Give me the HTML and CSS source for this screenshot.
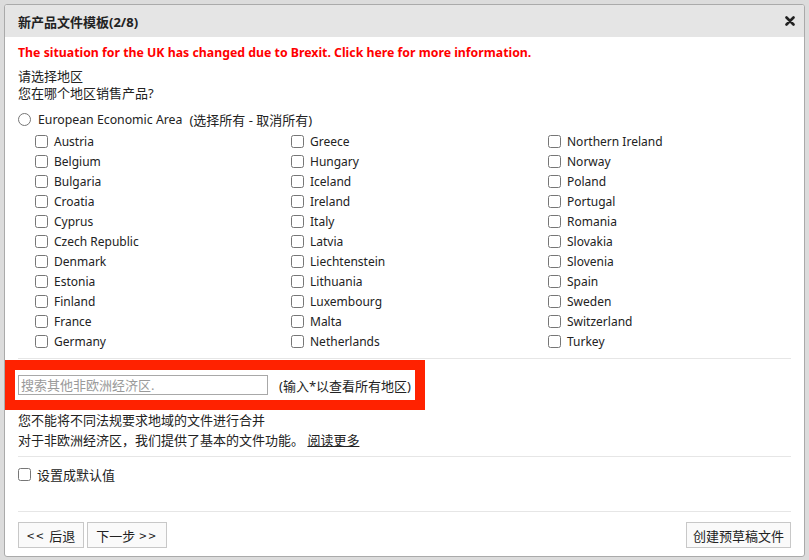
FILE: index.html
```html
<!DOCTYPE html>
<html lang="zh">
<head>
    <meta charset="UTF-8">
    <meta name="viewport" content="width=device-width, initial-scale=1.0">
    <title>新产品文件模板</title>
    <link rel="stylesheet" href="styles.css">
</head>
<body>
    <div class="dialog">
        <div class="dialog-head">
            <span class="title">新产品文件模板(2/8)</span>
            <span class="close">
                <svg width="10" height="10" viewBox="0 0 10 10"><path d="M1.5 1.5 L8.5 8.5 M8.5 1.5 L1.5 8.5" stroke="#222" stroke-width="2.6" stroke-linecap="round"/></svg>
            </span>
        </div>

        <div class="dialog-body">
            <p class="brexit">The situation for the UK has changed due to Brexit. Click here for more information.</p>
            <p class="question">请选择地区<br>您在哪个地区销售产品?</p>

            <label class="eea"><input type="radio" name="area"><span>European Economic Area</span><span class="toggle-all">(选择所有 - 取消所有)</span></label>

            <div class="countries">
                <label><input type="checkbox"> Austria</label>
                <label><input type="checkbox"> Belgium</label>
                <label><input type="checkbox"> Bulgaria</label>
                <label><input type="checkbox"> Croatia</label>
                <label><input type="checkbox"> Cyprus</label>
                <label><input type="checkbox"> Czech Republic</label>
                <label><input type="checkbox"> Denmark</label>
                <label><input type="checkbox"> Estonia</label>
                <label><input type="checkbox"> Finland</label>
                <label><input type="checkbox"> France</label>
                <label><input type="checkbox"> Germany</label>
                <label><input type="checkbox"> Greece</label>
                <label><input type="checkbox"> Hungary</label>
                <label><input type="checkbox"> Iceland</label>
                <label><input type="checkbox"> Ireland</label>
                <label><input type="checkbox"> Italy</label>
                <label><input type="checkbox"> Latvia</label>
                <label><input type="checkbox"> Liechtenstein</label>
                <label><input type="checkbox"> Lithuania</label>
                <label><input type="checkbox"> Luxembourg</label>
                <label><input type="checkbox"> Malta</label>
                <label><input type="checkbox"> Netherlands</label>
                <label><input type="checkbox"> Northern Ireland</label>
                <label><input type="checkbox"> Norway</label>
                <label><input type="checkbox"> Poland</label>
                <label><input type="checkbox"> Portugal</label>
                <label><input type="checkbox"> Romania</label>
                <label><input type="checkbox"> Slovakia</label>
                <label><input type="checkbox"> Slovenia</label>
                <label><input type="checkbox"> Spain</label>
                <label><input type="checkbox"> Sweden</label>
                <label><input type="checkbox"> Switzerland</label>
                <label><input type="checkbox"> Turkey</label>
            </div>

            <div class="line"></div>

            <div class="search-box">
                <input type="text" placeholder="搜索其他非欧洲经济区.">
                <span class="hint">(输入*以查看所有地区)</span>
            </div>

            <p class="note">您不能将不同法规要求地域的文件进行合并<br>对于非欧洲经济区，我们提供了基本的文件功能。 <a href="#">阅读更多</a></p>

            <div class="line"></div>

            <label class="default"><input type="checkbox"> 设置成默认值</label>
        </div>

        <div class="dialog-foot">
            <div class="nav-buttons">
                <button><span class="arrows">&lt;&lt;</span> 后退</button>
                <button>下一步 <span class="arrows">&gt;&gt;</span></button>
            </div>
            <button class="draft">创建预草稿文件</button>
        </div>
    </div>
</body>
</html>
```

FILE: styles.css
```css
body {
    margin: 0;
    padding: 4px 0 0 4px;
    background-color: #dcdcdc;
    font-family: "Noto Sans", "Noto Sans CJK SC", sans-serif;
    font-size: 13px;
    color: #222;
}
.dialog {
    width: 799px;
    height: 551px;
    background: #fff;
    border: 1px solid #aaa;
    border-radius: 3px;
    display: flex;
    flex-direction: column;
    overflow: hidden;
}
.dialog-head {
    height: 32px;
    background: #e5e5e5;
    display: flex;
    align-items: center;
    justify-content: space-between;
    padding: 0 9px 0 13px;
}
.title {
    font-weight: bold;
    font-size: 13px;
}
.close {
    display: flex;
}
.dialog-body {
    padding: 7px 13px 0 13px;
    flex: 1;
}
.dialog-body p {
    margin: 0;
}
.brexit {
    color: #f00;
    font-weight: bold;
    font-size: 12.3px;
    line-height: 18px;
}
.question {
    margin-top: 6px !important;
    line-height: 17px;
}
.eea {
    display: flex;
    align-items: center;
    height: 20px;
    margin-top: 7px;
    font-size: 12.3px;
}
.eea .toggle-all {
    font-size: 13px;
    margin-left: 7px;
}
.eea input {
    margin: 0 7px 0 0;
    width: 13px;
    height: 13px;
}
.countries {
    display: grid;
    grid-template-columns: 256px 257px 240px;
    grid-template-rows: repeat(11, 20px);
    grid-auto-flow: column;
    padding-left: 17px;
    margin-top: 2px;
    font-size: 12px;
}
.countries label,
.default {
    display: flex;
    align-items: center;
}
.countries input,
.default input {
    margin: 0 6px 0 0;
    width: 13px;
    height: 13px;
}
.line {
    height: 1px;
    background: #e6e6e6;
}
.countries + .line {
    margin-top: 7px;
}
.search-box {
    margin: 1px 0 0 -13px;
    width: 397px;
    border: 10px solid #ff2200;
    display: flex;
    align-items: center;
    padding: 5px 0 5px 3px;
    box-sizing: content-box;
    height: 20px;
}
.search-box input {
    width: 250px;
    height: 20px;
    box-sizing: border-box;
    border: 1px solid #a8a8a8;
    padding: 0 2px;
    font-family: "Noto Sans", "Noto Sans CJK SC", sans-serif;
    font-size: 13px;
    margin: 0;
    outline: none;
}
.search-box input::placeholder {
    color: #9a9a9a;
}
.hint {
    margin-left: 11px;
}
.note {
    line-height: 20px;
    margin-bottom: 6px !important;
}
.note a {
    color: #222;
    text-decoration: underline;
}
.default {
    height: 20px;
    margin-top: 7px;
}
.dialog-foot {
    margin: 0 13px;
    border-top: 1px solid #e6e6e6;
    padding: 10px 0 8px 0;
    display: flex;
    justify-content: space-between;
}
.nav-buttons {
    display: flex;
    gap: 3px;
}
button {
    height: 26px;
    background: #fafafa;
    border: 1px solid #c8c8c8;
    font-family: "Noto Sans CJK SC", sans-serif;
    font-size: 13px;
    color: #222;
    padding: 0 8px;
    word-spacing: 1px;
    margin: 0;
}
.draft {
    padding: 0 6px;
}
.arrows {
    letter-spacing: 2px;
}
```
